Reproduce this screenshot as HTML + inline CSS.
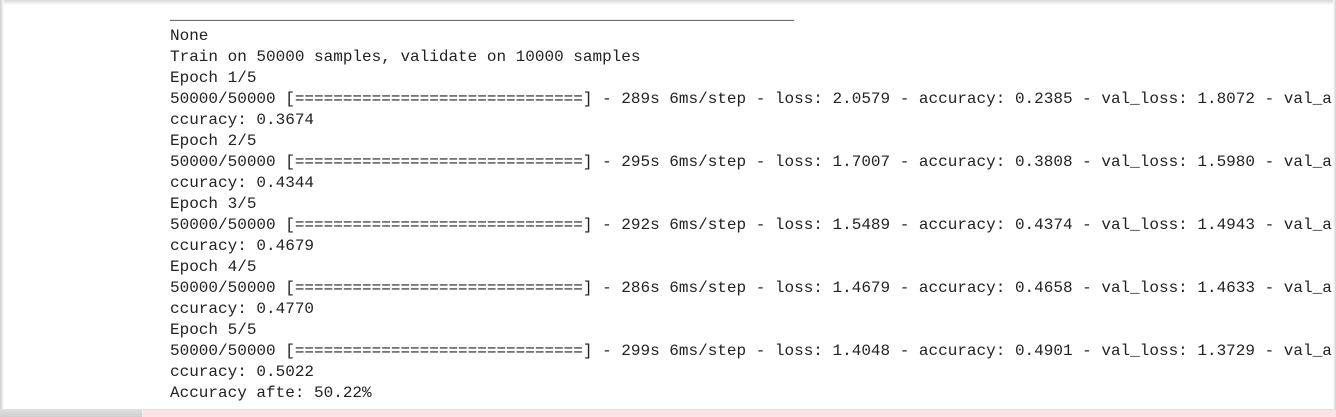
<!DOCTYPE html>
<html><head><style>
html,body{margin:0;padding:0;width:1336px;height:417px;overflow:hidden;background:#fff;}
.top{position:absolute;left:0;top:0;width:1336px;height:5px;background:linear-gradient(#d8d8d8,#fff);}
.left{position:absolute;left:0;top:0;width:4px;height:417px;background:linear-gradient(90deg,#cfcfcf,#fff);}
.right{position:absolute;right:0;top:0;width:3px;height:417px;background:linear-gradient(90deg,#fff,#d0d0d0);}
.bot{position:absolute;left:0;top:409px;width:1336px;height:8px;background:linear-gradient(#e0e0e0,#cfcfcf);}
.pink{position:absolute;left:142px;top:410px;width:1194px;height:7px;background:#fde3e3;}
pre{position:absolute;left:170px;top:5px;margin:0;font-family:"Liberation Mono",monospace;font-size:16px;line-height:21px;color:#222;white-space:pre;}
</style></head><body>
<div class="top"></div><div class="left"></div><div class="right"></div>
<pre>_________________________________________________________________
None
Train on 50000 samples, validate on 10000 samples
Epoch 1/5
50000/50000 [==============================] - 289s 6ms/step - loss: 2.0579 - accuracy: 0.2385 - val_loss: 1.8072 - val_a
ccuracy: 0.3674
Epoch 2/5
50000/50000 [==============================] - 295s 6ms/step - loss: 1.7007 - accuracy: 0.3808 - val_loss: 1.5980 - val_a
ccuracy: 0.4344
Epoch 3/5
50000/50000 [==============================] - 292s 6ms/step - loss: 1.5489 - accuracy: 0.4374 - val_loss: 1.4943 - val_a
ccuracy: 0.4679
Epoch 4/5
50000/50000 [==============================] - 286s 6ms/step - loss: 1.4679 - accuracy: 0.4658 - val_loss: 1.4633 - val_a
ccuracy: 0.4770
Epoch 5/5
50000/50000 [==============================] - 299s 6ms/step - loss: 1.4048 - accuracy: 0.4901 - val_loss: 1.3729 - val_a
ccuracy: 0.5022
Accuracy afte: 50.22%</pre>
<div class="bot"></div><div class="pink"></div>
</body></html>
